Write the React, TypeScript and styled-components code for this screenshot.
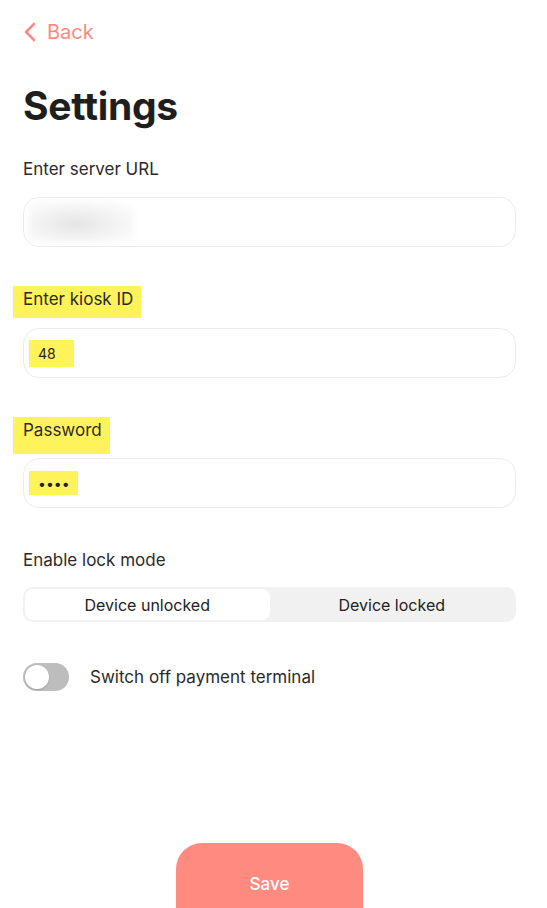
import React from "react";
import styled, { createGlobalStyle } from "styled-components";

const GlobalStyle = createGlobalStyle`
  html, body {
    margin: 0;
    padding: 0;
    background: #ffffff;
  }
  body {
    font-family: Inter, "Noto Sans", "Liberation Sans", sans-serif;
    color: #222222;
    overflow: hidden;
  }
`;

const Page = styled.div`
  width: 547px;
  height: 908px;
  box-sizing: border-box;
  padding: 20px 31px 0 23px;
  display: flex;
  flex-direction: column;
  position: relative;
  overflow: hidden;
`;

const BackLink = styled.button`
  display: flex;
  align-items: center;
  gap: 10px;
  border: none;
  background: none;
  padding: 0;
  color: #ff8a80;
  font-family: inherit;
  font-size: 20px;
  height: 24px;
  cursor: pointer;
  align-self: flex-start;
`;

const Title = styled.h1`
  margin: 37px 0 0;
  font-size: 39px;
  font-weight: 700;
  letter-spacing: -0.3px;
  color: #1e1e1e;
  line-height: 50px;
`;

const Field = styled.div<{ $top: number }>`
  display: flex;
  flex-direction: column;
  margin-top: ${(p) => p.$top}px;
`;

const Label = styled.div<{ $highlight?: boolean; $pt?: number; $pb?: number }>`
  font-size: 17px;
  line-height: 22px;
  color: #2a2a2a;
  align-self: flex-start;
  ${(p) =>
    p.$highlight
      ? `
    background: #fff35c;
    margin-left: -10px;
    padding: ${p.$pt ?? 5}px 8px ${p.$pb ?? 5}px 10px;
  `
      : ""}
`;

const InputBox = styled.div<{ $top: number }>`
  margin-top: ${(p) => p.$top}px;
  height: 50px;
  box-sizing: border-box;
  border: 1px solid #ececec;
  border-radius: 16px;
  display: flex;
  align-items: center;
  padding-left: 5px;
  position: relative;
  overflow: hidden;
`;

const Blurred = styled.div`
  width: 105px;
  height: 40px;
  background: radial-gradient(ellipse at 45% 55%, #e4e4e4 0%, #efefef 35%, #f7f7f7 65%, #ffffff 100%);
  filter: blur(3px);
`;

const Value = styled.span<{ $w: number; $h: number }>`
  display: inline-flex;
  align-items: center;
  width: ${(p) => p.$w}px;
  height: ${(p) => p.$h}px;
  box-sizing: border-box;
  padding-left: 9px;
  background: #fff35c;
  font-size: 14px;
  color: #222222;
`;

const Segmented = styled.div`
  margin-top: 16px;
  height: 35px;
  box-sizing: border-box;
  padding: 2px;
  background: #f1f1f1;
  border-radius: 10px;
  display: grid;
  grid-template-columns: 1fr 1fr;
`;

const Segment = styled.button<{ $active?: boolean }>`
  border: none;
  border-radius: 8px;
  background: ${(p) => (p.$active ? "#ffffff" : "transparent")};
  font-family: inherit;
  font-size: 16px;
  color: #222222;
  padding: 0;
  cursor: pointer;
`;

const ToggleRow = styled.div`
  margin-top: 41px;
  display: flex;
  align-items: center;
  gap: 21px;
`;

const Track = styled.div`
  width: 46px;
  height: 28px;
  border-radius: 14px;
  background: #bdbdbd;
  position: relative;
  flex-shrink: 0;
`;

const Knob = styled.div`
  position: absolute;
  top: 2px;
  left: 2px;
  width: 24px;
  height: 24px;
  border-radius: 50%;
  background: #ffffff;
  box-shadow: 0 1px 2px rgba(0, 0, 0, 0.15);
`;

const ToggleLabel = styled.span`
  font-size: 17px;
  color: #2a2a2a;
`;

const Footer = styled.div`
  margin-top: auto;
  display: flex;
  justify-content: center;
`;

const SaveButton = styled.button`
  width: 187px;
  height: 90px;
  margin-bottom: -25px;
  border: none;
  border-radius: 26px;
  background: #ff8a80;
  color: #ffffff;
  font-family: inherit;
  font-size: 17px;
  font-weight: 500;
  padding: 0 0 8px;
  cursor: pointer;
`;

const Chevron = () => (
  <svg width="14" height="20" viewBox="0 0 14 20" fill="none">
    <path d="M11 2L3 10L11 18" stroke="#ff8a80" strokeWidth="2.6" strokeLinecap="round" strokeLinejoin="round" />
  </svg>
);

export default function App() {
  return (
    <>
      <GlobalStyle />
      <Page>
        <BackLink>
          <Chevron />
          Back
        </BackLink>
        <Title>Settings</Title>

        <Field $top={27}>
          <Label>Enter server URL</Label>
          <InputBox $top={17}>
            <Blurred />
          </InputBox>
        </Field>

        <Field $top={39}>
          <Label $highlight $pt={2} $pb={8}>Enter kiosk ID</Label>
          <InputBox $top={10}>
            <Value $w={45} $h={27}>48</Value>
          </InputBox>
        </Field>

        <Field $top={39}>
          <Label $highlight $pt={2} $pb={13}>Password</Label>
          <InputBox $top={4}>
            <Value $w={49} $h={24}>••••</Value>
          </InputBox>
        </Field>

        <Field $top={41}>
          <Label>Enable lock mode</Label>
          <Segmented>
            <Segment $active>Device unlocked</Segment>
            <Segment>Device locked</Segment>
          </Segmented>
        </Field>

        <ToggleRow>
          <Track>
            <Knob />
          </Track>
          <ToggleLabel>Switch off payment terminal</ToggleLabel>
        </ToggleRow>

        <Footer>
          <SaveButton>Save</SaveButton>
        </Footer>
      </Page>
    </>
  );
}
